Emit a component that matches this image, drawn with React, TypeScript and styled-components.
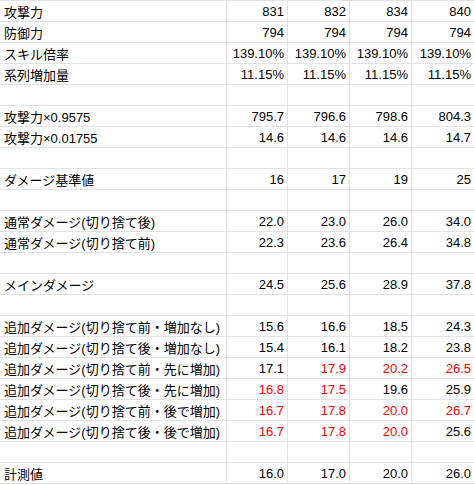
import React from "react";
import styled, {createGlobalStyle} from "styled-components";

type Cell = string | {v: string; red?: boolean};

type Row = {
  label?: string;
  values?: Cell[];
}

const GlobalStyle = createGlobalStyle`
  html, body {
    margin: 0;
    padding: 0;
    background: #fff;
  }
`;

const ROWS: Row[] = [
  {label: "攻撃力", values: ["831", "832", "834", "840"]},
  {label: "防御力", values: ["794", "794", "794", "794"]},
  {label: "スキル倍率", values: ["139.10%", "139.10%", "139.10%", "139.10%"]},
  {label: "系列増加量", values: ["11.15%", "11.15%", "11.15%", "11.15%"]},
  {},
  {label: "攻撃力×0.9575", values: ["795.7", "796.6", "798.6", "804.3"]},
  {label: "攻撃力×0.01755", values: ["14.6", "14.6", "14.6", "14.7"]},
  {},
  {label: "ダメージ基準値", values: ["16", "17", "19", "25"]},
  {},
  {label: "通常ダメージ(切り捨て後)", values: ["22.0", "23.0", "26.0", "34.0"]},
  {label: "通常ダメージ(切り捨て前)", values: ["22.3", "23.6", "26.4", "34.8"]},
  {},
  {label: "メインダメージ", values: ["24.5", "25.6", "28.9", "37.8"]},
  {},
  {label: "追加ダメージ(切り捨て前・増加なし)", values: ["15.6", "16.6", "18.5", "24.3"]},
  {label: "追加ダメージ(切り捨て後・増加なし)", values: ["15.4", "16.1", "18.2", "23.8"]},
  {label: "追加ダメージ(切り捨て前・先に増加)", values: ["17.1", {v: "17.9", red: true}, {v: "20.2", red: true}, {v: "26.5", red: true}]},
  {label: "追加ダメージ(切り捨て後・先に増加)", values: [{v: "16.8", red: true}, {v: "17.5", red: true}, "19.6", "25.9"]},
  {label: "追加ダメージ(切り捨て前・後で増加)", values: [{v: "16.7", red: true}, {v: "17.8", red: true}, {v: "20.0", red: true}, {v: "26.7", red: true}]},
  {label: "追加ダメージ(切り捨て後・後で増加)", values: [{v: "16.7", red: true}, {v: "17.8", red: true}, {v: "20.0", red: true}, "25.6"]},
  {},
  {label: "計測値", values: ["16.0", "17.0", "20.0", "26.0"]},
];

const Sheet = styled.div`
  display: grid;
  grid-template-columns: 227px 61px 62px 62px 62px;
  grid-auto-rows: 21px;
  border-top: 1px solid #e2e2e2;
  font-family: "Liberation Sans", Arial, "Noto Sans CJK JP", sans-serif;
  font-size: 13px;
  color: #000;
`;

const Cell = styled.div<{ $num?: boolean; $red?: boolean; $last?: boolean }>`
  box-sizing: border-box;
  display: flex;
  align-items: center;
  justify-content: ${p => p.$num ? "flex-end" : "flex-start"};
  padding: ${p => p.$num ? "1px 3px 0 2px" : "1px 2px 0 4px"};
  border-bottom: 1px solid #e2e2e2;
  border-right: ${p => p.$last ? "none" : "1px solid #e2e2e2"};
  white-space: nowrap;
  overflow: hidden;
  color: ${p => p.$red ? "#ff0000" : "#000"};
`;

export default function App() {
  return <>
    <GlobalStyle/>
    <Sheet>
      {ROWS.map((row, i) => (
        <React.Fragment key={i}>
          <Cell>{row.label ?? ""}</Cell>
          {[0, 1, 2, 3].map(j => {
            const c = row.values?.[j];
            const v = typeof c === "string" ? c : c?.v ?? "";
            const red = typeof c === "object" && !!c.red;
            return <Cell key={j} $num $red={red} $last={j === 3}>{v}</Cell>
          })}
        </React.Fragment>
      ))}
    </Sheet>
  </>
}
